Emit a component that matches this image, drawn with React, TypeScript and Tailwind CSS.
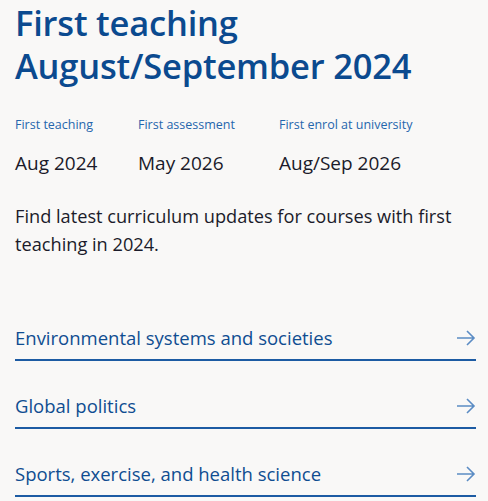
import React from 'react';

const stats = [
  { label: 'First teaching', value: 'Aug 2024' },
  { label: 'First assessment', value: 'May 2026' },
  { label: 'First enrol at university', value: 'Aug/Sep 2026' },
];

const courses = [
  'Environmental systems and societies',
  'Global politics',
  'Sports, exercise, and health science',
];

const ArrowRight = () => (
  <svg width="20" height="18" viewBox="0 0 20 18" fill="none" className="text-[#5b8cc4]">
    <path d="M1 9h17M11 2l7 7-7 7" stroke="currentColor" strokeWidth="1.6" />
  </svg>
);

export default function App() {
  return (
    <div
      className="min-h-screen bg-[#f9f8f7] pl-[15px] pr-[12px] pt-[1px]"
      style={{ fontFamily: '"Open Sans", "Noto Sans", sans-serif' }}
    >
      <h1 className="text-[34.5px] leading-[43px] font-semibold text-[#0b4a8f] tracking-[-0.2px]">
        First teaching
        <br />
        August/September 2024
      </h1>

      <div className="flex mt-[29px]">
        {stats.map((s, i) => (
          <div
            key={s.label}
            className={i === 0 ? 'w-[123px]' : i === 1 ? 'w-[141px]' : ''}
          >
            <div className="text-[12.5px] leading-[18px] text-[#2566ad]">{s.label}</div>
            <div className="text-[19px] leading-[24px] text-[#1b1b2a] mt-[17px]">{s.value}</div>
          </div>
        ))}
      </div>

      <p className="text-[18.2px] leading-[28px] text-[#1b1b2a] mt-[27px]">
        Find latest curriculum updates for courses with first teaching in 2024.
      </p>

      <div className="mt-[67px]">
        {courses.map((c) => (
          <a
            key={c}
            href="#"
            className="flex items-center justify-between border-b-2 border-[#1d5ba3] pb-[8px] mb-[32px] text-[#0f4d91] text-[18.5px] leading-[26px]"
          >
            <span>{c}</span>
            <ArrowRight />
          </a>
        ))}
      </div>
    </div>
  );
}
